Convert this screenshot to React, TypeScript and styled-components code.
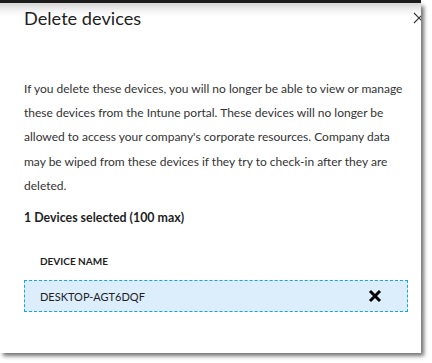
import React from "react";
import styled, { createGlobalStyle } from "styled-components";

const GlobalStyle = createGlobalStyle`
  html, body {
    margin: 0;
    padding: 0;
    background: #ffffff;
  }
  body {
    font-family: "Lato", "Noto Sans", sans-serif;
    color: #1e1e1e;
  }
`;

const bodyLines = [
  "If you delete these devices, you will no longer be able to view or manage",
  "these devices from the Intune portal. These devices will no longer be",
  "allowed to access your company's corporate resources. Company data",
  "may be wiped from these devices if they try to check-in after they are",
  "deleted.",
];

const devices = ["DESKTOP-AGT6DQF"];

const App = () => {
  return (
    <>
      <GlobalStyle />
      <Screen>
        <TopBar />
        <Panel>
          <Header>
            <Title>Delete devices</Title>
            <CloseButton aria-label="Close">
              <svg width="12" height="12" viewBox="0 0 12 12">
                <path d="M1 1 L11 11 M11 1 L1 11" stroke="#333" strokeWidth="1.1" fill="none" />
              </svg>
            </CloseButton>
          </Header>
          <Body>
            {bodyLines.map((l, i) => (
              <React.Fragment key={i}>
                {l}
                {i < bodyLines.length - 1 && <br />}
              </React.Fragment>
            ))}
          </Body>
          <Count>1 Devices selected (100 max)</Count>
          <ColumnHead>DEVICE NAME</ColumnHead>
          {devices.map((d) => (
            <DeviceRow key={d}>
              <DeviceName>{d}</DeviceName>
              <RemoveButton aria-label="Remove">
                <svg width="14" height="14" viewBox="0 0 14 14">
                  <path d="M2 2 L12 12 M12 2 L2 12" stroke="#000" strokeWidth="3" fill="none" />
                </svg>
              </RemoveButton>
            </DeviceRow>
          ))}
        </Panel>
      </Screen>
    </>
  );
};
export default App;

const Screen = styled.div`
  width: 432px;
  height: 363px;
  overflow: hidden;
  display: flex;
  flex-direction: column;
`;

const TopBar = styled.div`
  height: 3px;
  background: #1c1c1c;
  width: 421px;
`;

const Panel = styled.section`
  width: 421px;
  height: 350px;
  box-sizing: border-box;
  background: linear-gradient(#d6d6d6 0px, #f4f4f4 8px, #ffffff 14px);
  box-shadow: 3px 3px 4px rgba(0, 0, 0, 0.55);
  padding: 0 0 0 24px;
  overflow: hidden;
`;

const Header = styled.div`
  display: flex;
  align-items: center;
  justify-content: space-between;
  height: 30px;
`;

const Title = styled.h1`
  margin: 0;
  font-family: "Lato", "Noto Sans", sans-serif;
  font-weight: 400;
  font-size: 18.2px;
  color: #1e1e1e;
`;

const CloseButton = styled.div`
  width: 12px;
  height: 12px;
  margin-right: -4px;
  display: flex;
`;

const Body = styled.p`
  margin: 44px 0 0 0;
  white-space: nowrap;
  font-size: 12px;
  line-height: 24.2px;
  color: #333333;
`;

const Count = styled.div`
  margin-top: 12px;
  font-size: 12.4px;
  font-weight: 700;
  color: #1e1e1e;
`;

const ColumnHead = styled.div`
  margin-top: 30px;
  padding-left: 16px;
  font-size: 10px;
  font-weight: 700;
  color: #1e1e1e;
`;

const DeviceRow = styled.div`
  margin-top: 13px;
  width: 384px;
  height: 32px;
  box-sizing: border-box;
  border: 1px dashed #1aa3dd;
  background: #dcedfc;
  display: flex;
  align-items: center;
  justify-content: space-between;
  padding: 0 25px 0 15px;
`;

const DeviceName = styled.span`
  font-size: 11px;
  color: #1e1e1e;
`;

const RemoveButton = styled.div`
  display: flex;
`;
